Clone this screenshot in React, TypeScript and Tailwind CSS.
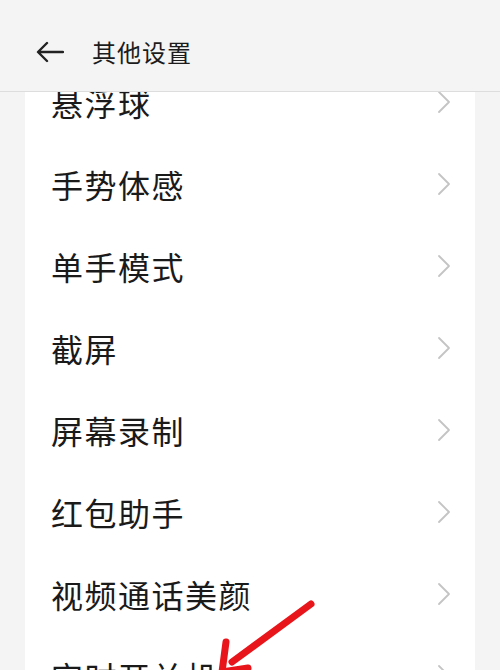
import React from 'react';

const items = ['悬浮球', '手势体感', '单手模式', '截屏', '屏幕录制', '红包助手', '视频通话美颜', '定时开关机'];

function Chevron() {
  return (
    <svg width="14" height="24" viewBox="0 0 14 24" fill="none" className="shrink-0">
      <path d="M2 2 L12 12 L2 22" stroke="#c4c4c4" strokeWidth="1.8" strokeLinecap="round" strokeLinejoin="round" />
    </svg>
  );
}

export default function App() {
  return (
    <div
      className="relative w-[500px] h-[670px] overflow-hidden bg-[#f4f4f4] flex flex-col"
      style={{ fontFamily: '"Noto Sans CJK SC", "Noto Sans", sans-serif' }}
    >
      <header className="h-[92px] shrink-0 flex items-center pt-[12px] pl-[36px] border-b border-[#dddddd] bg-[#f4f4f4] z-10">
        <svg width="28" height="22" viewBox="0 0 28 22" fill="none">
          <path d="M27 11 H3 M11 2 L2 11 L11 20" stroke="#222" strokeWidth="2.4" strokeLinecap="round" strokeLinejoin="round" />
        </svg>
        <span className="ml-[28px] text-[24px] text-[#1c1c1c] leading-none tracking-[1px]">其他设置</span>
      </header>
      <div className="flex-1 overflow-hidden px-[25px]">
        <ul className="-mt-[31px] bg-white">
          {items.map((t) => (
            <li key={t} className="h-[82px] flex items-center justify-between pl-[26px] pr-[24px]">
              <span className="text-[32px] text-[#1a1a1a] leading-none tracking-[1.5px]">{t}</span>
              <Chevron />
            </li>
          ))}
        </ul>
      </div>
      <svg className="absolute left-0 top-0 pointer-events-none" width="500" height="670" viewBox="0 0 500 670">
        <path d="M311 604 L232 662" stroke="#e8161b" strokeWidth="7" strokeLinecap="round" />
        <path d="M226 642 L222 672 L248 668" stroke="#e8161b" strokeWidth="7" strokeLinecap="round" strokeLinejoin="round" fill="none" />
      </svg>
    </div>
  );
}
